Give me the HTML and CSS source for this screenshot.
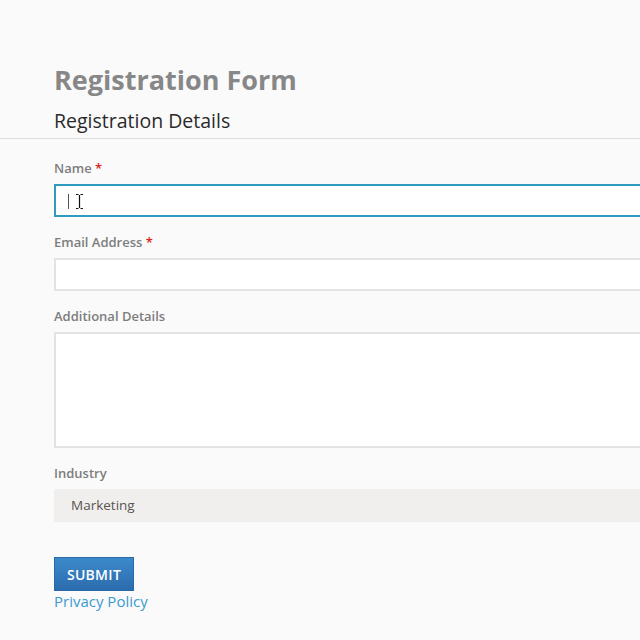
FILE: index.html
```html
<!DOCTYPE html>
<html lang="en">
<head>
<meta charset="utf-8">
<title>Registration Form</title>
<link rel="stylesheet" href="styles.css">
</head>
<body>
<main class="page">
  <h1 class="title">Registration Form</h1>
  <h2 class="section">Registration Details</h2>
  <form class="form">
    <div class="field">
      <label class="label" for="name">Name <span class="req">*</span></label>
      <div class="input-wrap">
        <input class="input input-focus" id="name" type="text">
        <span class="caret"></span>
        <svg class="ibeam" width="9" height="17" viewBox="0 0 9 17"><path d="M1 1.5h2.5M5.5 1.5H8M4.5 2v13M1 15.5h2.5M5.5 15.5H8" stroke="#111" stroke-width="1.2" fill="none"/></svg>
      </div>
    </div>
    <div class="field">
      <label class="label" for="email">Email Address <span class="req">*</span></label>
      <input class="input" id="email" type="text">
    </div>
    <div class="field">
      <label class="label" for="details">Additional Details</label>
      <textarea class="input textarea" id="details"></textarea>
    </div>
    <div class="field">
      <label class="label" for="industry">Industry</label>
      <div class="select">Marketing</div>
    </div>
    <button class="submit" type="button">SUBMIT</button>
    <a class="privacy" href="#">Privacy Policy</a>
  </form>
</main>
</body>
</html>
```
FILE: styles.css
```css
html, body {
  margin: 0;
  padding: 0;
  background: #fafafa;
  overflow: hidden;
  font-family: "Open Sans", Lato, Arial, sans-serif;
}
.page {
  width: 760px;
  padding: 62px 0 0 54px;
}
.title {
  margin: 0;
  font-size: 27px;
  line-height: 36px;
  font-weight: 700;
  color: #878787;
}
.section {
  margin: 9px 0 0;
  font-size: 19.5px;
  line-height: 28px;
  font-weight: 400;
  color: #2a2a2a;
  padding-bottom: 3px;
  border-bottom: 1px solid #dedede;
  margin-left: -54px;
  padding-left: 54px;
}
.form {
  display: flex;
  flex-direction: column;
  padding-top: 19px;
}
.field {
  display: flex;
  flex-direction: column;
  margin-bottom: 15px;
}
.label {
  font-size: 13px;
  line-height: 20px;
  font-weight: 600;
  color: #7d7d7d;
  margin-bottom: 6px;
}
.req {
  color: #e0201b;
}
.input-wrap {
  position: relative;
}
.input {
  display: block;
  box-sizing: border-box;
  width: 100%;
  height: 33px;
  margin: 0;
  border: 2px solid #e3e3e3;
  background: #fff;
  outline: none;
  font: inherit;
}
.input-focus {
  border-color: #2f9bbf;
}
.textarea {
  height: 116px;
  resize: none;
}
.caret {
  position: absolute;
  left: 14px;
  top: 10px;
  width: 1px;
  height: 15px;
  background: #555;
}
.ibeam {
  position: absolute;
  left: 21px;
  top: 9px;
}
.select {
  box-sizing: border-box;
  height: 33px;
  background: #f0efee;
  padding-left: 17px;
  font-size: 13.5px;
  line-height: 33px;
  color: #5a5550;
}
.submit {
  align-self: flex-start;
  margin-top: 20px;
  width: 80px;
  height: 34px;
  border: 1px solid #2a69a6;
  background: linear-gradient(#3c8acb, #2b6cae);
  color: #fff;
  font-family: inherit;
  font-size: 14px;
  font-weight: 600;
  letter-spacing: 0.3px;
  padding: 0;
}
.privacy {
  align-self: flex-start;
  font-size: 15px;
  line-height: 20px;
  color: #3b9bd0;
  text-decoration: none;
  margin-top: 0;
}
```
